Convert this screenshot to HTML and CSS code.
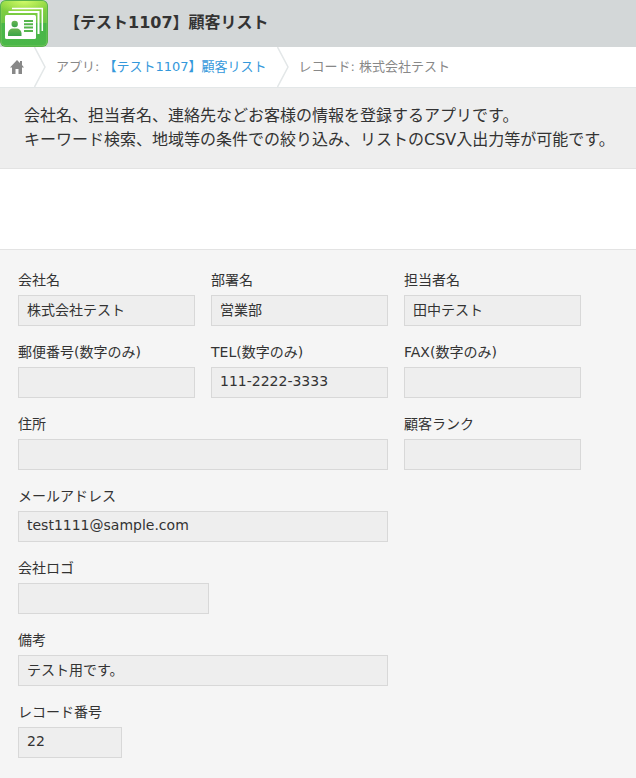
FILE: index.html
```
<!DOCTYPE html>
<html lang="ja">
  <head>
    <meta charset="UTF-8" />
    <meta name="viewport" content="width=device-width, initial-scale=1.0" />
    <title>【テスト1107】顧客リスト</title>
    <link rel="stylesheet" href="styles.css">
  </head>
  <body>
    <header class="app-header">
      <svg class="app-icon" viewBox="0 0 48 47" aria-hidden="true">
        <defs>
          <linearGradient id="base" x1="0" y1="0" x2="0" y2="1">
            <stop offset="0" stop-color="#8ed63c" />
            <stop offset="0.48" stop-color="#6cc445" />
            <stop offset="0.5" stop-color="#48b648" />
            <stop offset="1" stop-color="#4bb749" />
          </linearGradient>
          <radialGradient id="shine" cx="0.5" cy="0" r="0.6">
            <stop offset="0" stop-color="#d0fa68" />
            <stop offset="1" stop-color="#d0fa68" stop-opacity="0" />
          </radialGradient>
          <linearGradient id="person" x1="0" y1="0" x2="0" y2="1">
            <stop offset="0" stop-color="#68b552" />
            <stop offset="1" stop-color="#3aa447" />
          </linearGradient>
        </defs>
        <rect width="48" height="47" rx="6" fill="#43a63d" />
        <rect x="1" y="1" width="46" height="45" rx="5" fill="url(#base)" stroke="#8fd46c" stroke-width="0.6" />
        <rect x="1" y="1" width="46" height="22" rx="5" fill="url(#shine)" />
        <path d="M12 8.500H42.300V31" fill="none" stroke="#fff" stroke-width="1.500" />
        <path d="M8.500 12H38.500V34" fill="none" stroke="#fff" stroke-width="2" />
        <rect x="5" y="15" width="31" height="24" rx="1.500" fill="#fff" />
        <circle cx="14.700" cy="24" r="3.200" fill="url(#person)" />
        <path d="M8 36v-2.500c0-3 2.500-5 5-5h3.500c2.500 0 5 2 5 5V36z" fill="url(#person)" />
        <path d="M24 21h9M24 24.300h9M24 27.600h9M24 31h9" stroke="#55b54c" stroke-width="2" />
      </svg>
      <h1 class="app-title">【テスト1107】顧客リスト</h1>
    </header>

    <nav class="breadcrumb">
      <a class="home" href="#" aria-label="ホーム">
        <svg width="14" height="14" viewBox="0 0 14 14" aria-hidden="true">
          <path d="M7 0L10 3V1h2v4l2 2.500H12V14H8.500V9h-3v5H2V7.500H0z" fill="#888" />
        </svg>
      </a>
      <svg class="chevron" viewBox="0 0 12 40" aria-hidden="true"><path d="M0.500 0L11 20L0.500 40" /></svg>
      <span class="crumb">アプリ: <a href="#">【テスト1107】顧客リスト</a></span>
      <svg class="chevron" viewBox="0 0 12 40" aria-hidden="true"><path d="M0.500 0L11 20L0.500 40" /></svg>
      <span class="crumb">レコード: 株式会社テスト</span>
    </nav>

    <p class="description">
      会社名、担当者名、連絡先などお客様の情報を登録するアプリです。<br>
      キーワード検索、地域等の条件での絞り込み、リストのCSV入出力等が可能です。
    </p>

    <div class="toolbar"></div>

    <form class="record">
      <div class="row">
        <div class="field">
          <label for="company">会社名</label>
          <input type="text" id="company" value="株式会社テスト" readonly />
        </div>
        <div class="field">
          <label for="department">部署名</label>
          <input type="text" id="department" value="営業部" readonly />
        </div>
        <div class="field">
          <label for="person-name">担当者名</label>
          <input type="text" id="person-name" value="田中テスト" readonly />
        </div>
      </div>
      <div class="row">
        <div class="field">
          <label for="zip">郵便番号(数字のみ)</label>
          <input type="text" id="zip" readonly />
        </div>
        <div class="field">
          <label for="tel">TEL(数字のみ)</label>
          <input type="text" id="tel" value="111-2222-3333" readonly />
        </div>
        <div class="field">
          <label for="fax">FAX(数字のみ)</label>
          <input type="text" id="fax" readonly />
        </div>
      </div>
      <div class="row">
        <div class="field wide">
          <label for="address">住所</label>
          <input type="text" id="address" readonly />
        </div>
        <div class="field">
          <label for="rank">顧客ランク</label>
          <input type="text" id="rank" readonly />
        </div>
      </div>
      <div class="row">
        <div class="field wide">
          <label for="mail">メールアドレス</label>
          <input type="text" id="mail" value="test1111@sample.com" readonly />
        </div>
      </div>
      <div class="row">
        <div class="field logo">
          <label for="logo">会社ロゴ</label>
          <input type="text" id="logo" readonly />
        </div>
      </div>
      <div class="row">
        <div class="field wide">
          <label for="note">備考</label>
          <input type="text" id="note" value="テスト用です。" readonly />
        </div>
      </div>
      <div class="row">
        <div class="field number">
          <label for="record-no">レコード番号</label>
          <input type="text" id="record-no" value="22" readonly />
        </div>
      </div>
    </form>
  </body>
</html>
```
FILE: styles.css
```
* {
  box-sizing: border-box;
  margin: 0;
  padding: 0;
}

body {
  display: flex;
  flex-direction: column;
  min-height: 100vh;
  font-family: "DejaVu Sans", "Noto Sans CJK JP", sans-serif;
  font-size: 14px;
  color: #333;
  background-color: #fff;
}

.app-header {
  display: flex;
  align-items: center;
  gap: 16px;
  background-color: #d3d7d8;
}

.app-icon {
  width: 48px;
  height: 47px;
}

.app-title {
  padding-bottom: 2px;
  font-size: 16px;
  line-height: 24px;
}

.breadcrumb {
  display: flex;
  align-items: center;
  border-bottom: 1px solid #e3e7e8;
  font-size: 13px;
  line-height: 20px;
  color: #888;
}

.breadcrumb a {
  color: #3498db;
  text-decoration: none;
}

.breadcrumb a:hover {
  text-decoration: underline;
}

.home {
  display: flex;
  padding: 0 10px;
}

.chevron {
  width: 12px;
  height: 40px;
  fill: none;
  stroke: #e3e7e8;
  stroke-width: 1.5;
}

.crumb {
  padding: 0 10px;
}

.description {
  padding: 16px 8px 16px 24px;
  border-bottom: 1px solid #e3e3e3;
  background-color: #eee;
  font-size: 16px;
  line-height: 24px;
}

.toolbar {
  height: 80px;
}

.record {
  flex: 1;
  display: flex;
  flex-direction: column;
  gap: 16px;
  padding: 20px 18px;
  border-top: 1px solid #e3e3e3;
  background-color: #f5f5f5;
}

.row {
  display: flex;
  flex-wrap: wrap;
  gap: 16px;
}

.field {
  width: 177px;
}

.wide {
  width: 370px;
}

.logo {
  width: 191px;
}

.number {
  width: 104px;
}

.field label {
  display: block;
  padding-bottom: 5px;
  line-height: 20px;
}

.field input {
  display: block;
  width: 100%;
  height: 31px;
  padding: 0 8px 3px;
  border: 1px solid #d8d8d8;
  background-color: #eee;
  font: inherit;
  line-height: 20px;
  color: #333;
}
```
